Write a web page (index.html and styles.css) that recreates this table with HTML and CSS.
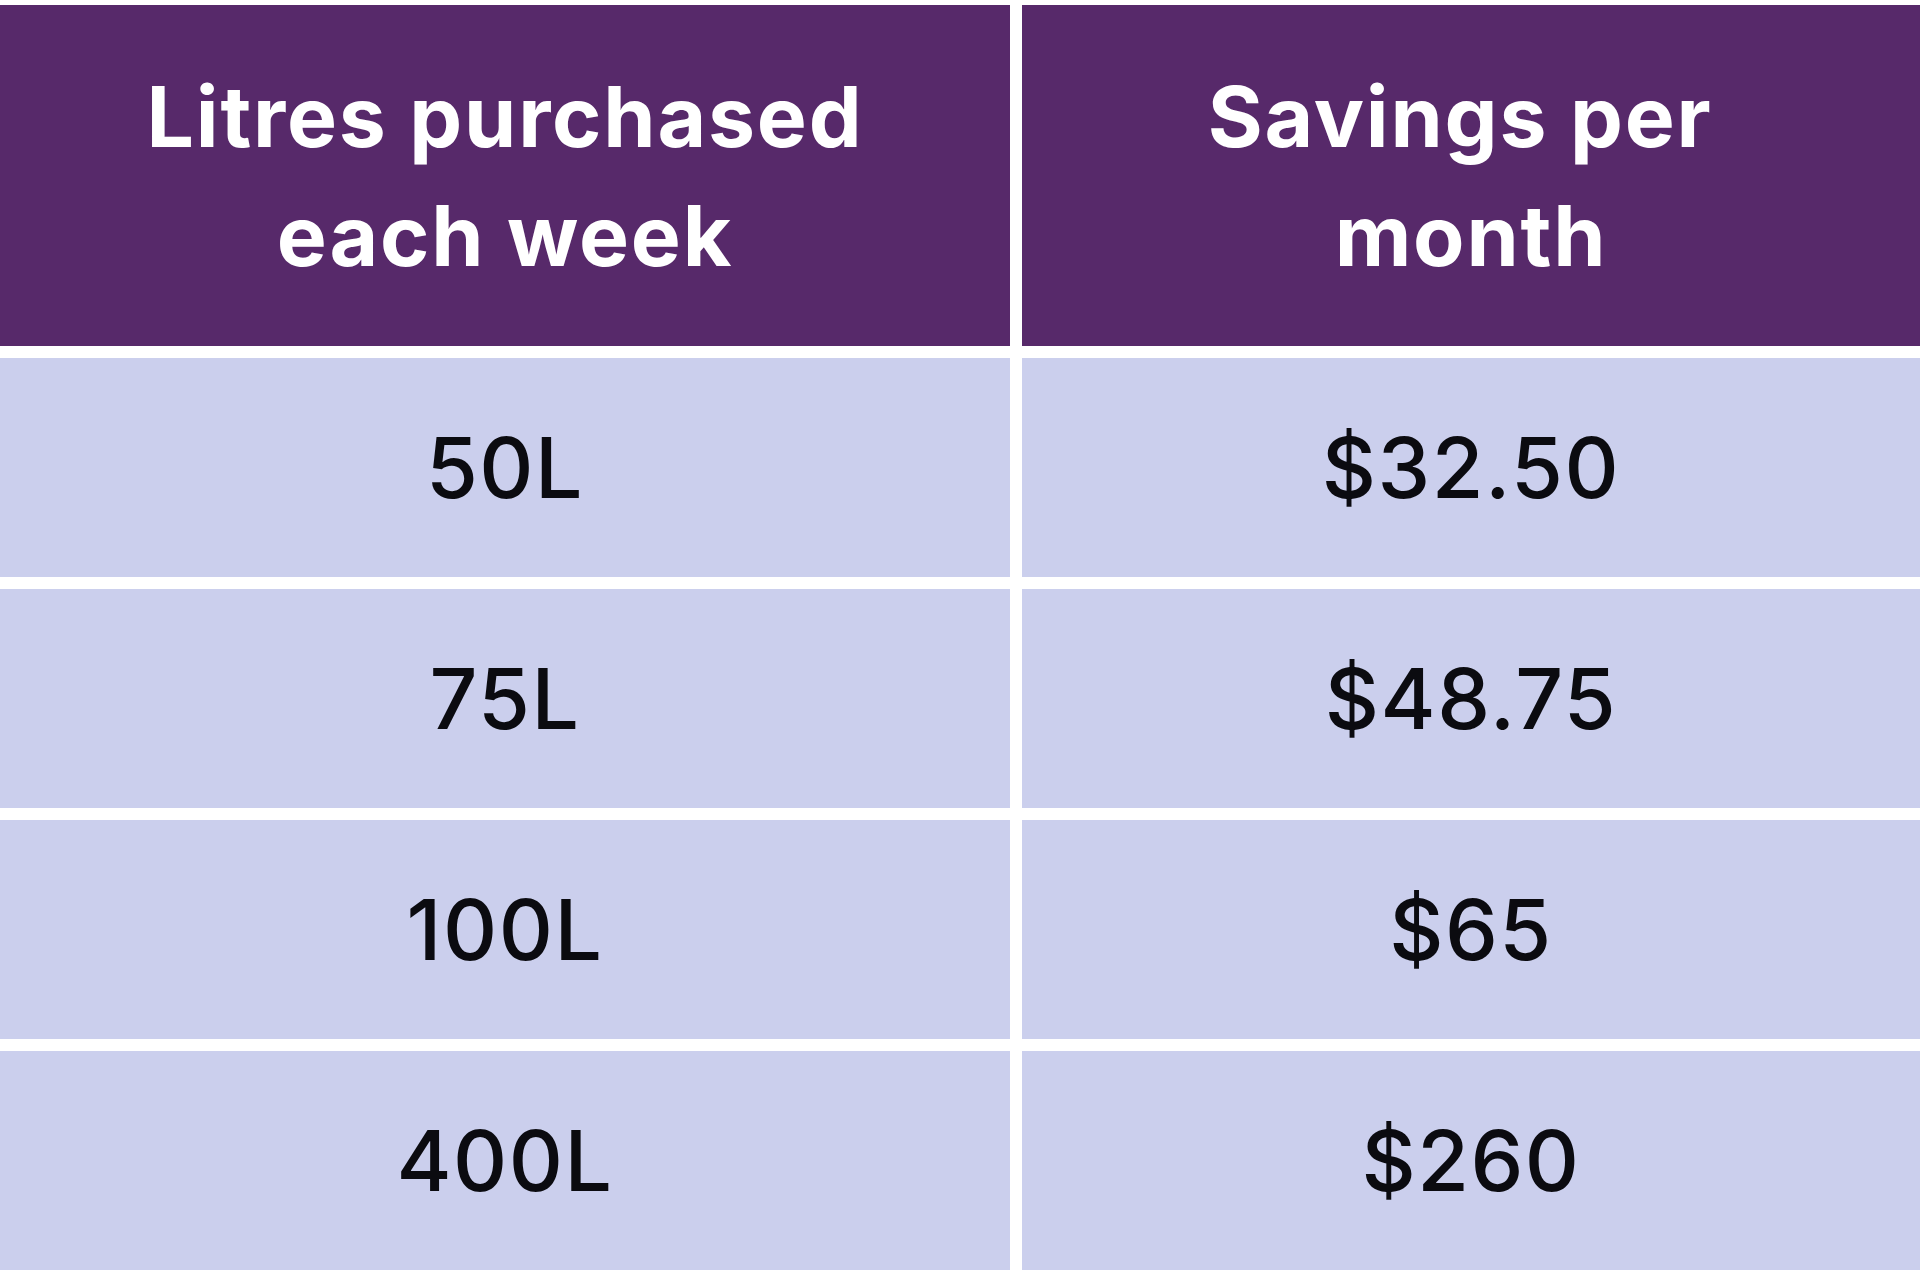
FILE: index.html
```html
<!DOCTYPE html>
<html lang="en">
<head>
<meta charset="utf-8">
<title>Litres savings</title>
<link rel="stylesheet" href="styles.css">
</head>
<body>
<div class="table">
  <div class="cell head">Litres purchased<br>each week</div>
  <div class="cell head">Savings per&nbsp;<br>month</div>
  <div class="cell">50L</div>
  <div class="cell">$32.50</div>
  <div class="cell">75L</div>
  <div class="cell">$48.75</div>
  <div class="cell">100L</div>
  <div class="cell">$65</div>
  <div class="cell">400L</div>
  <div class="cell">$260</div>
</div>
</body>
</html>
```
FILE: styles.css
```css
html, body {
  margin: 0;
  padding: 0;
  background: #ffffff;
}
body {
  padding-top: 5px;
  font-family: "Inter", "Open Sans", sans-serif;
}
.table {
  display: grid;
  grid-template-columns: 1010px 1fr;
  grid-template-rows: 341px repeat(4, 219px);
  gap: 12px;
}
.cell {
  background: #cbcfed;
  color: #0b0b10;
  display: flex;
  align-items: center;
  justify-content: center;
  text-align: center;
  font-size: 84px;
  font-weight: 500;
  letter-spacing: 1.5px;
}
.head {
  background: #57296a;
  color: #ffffff;
  font-weight: 700;
  letter-spacing: 1.8px;
  line-height: 119px;
}
```
